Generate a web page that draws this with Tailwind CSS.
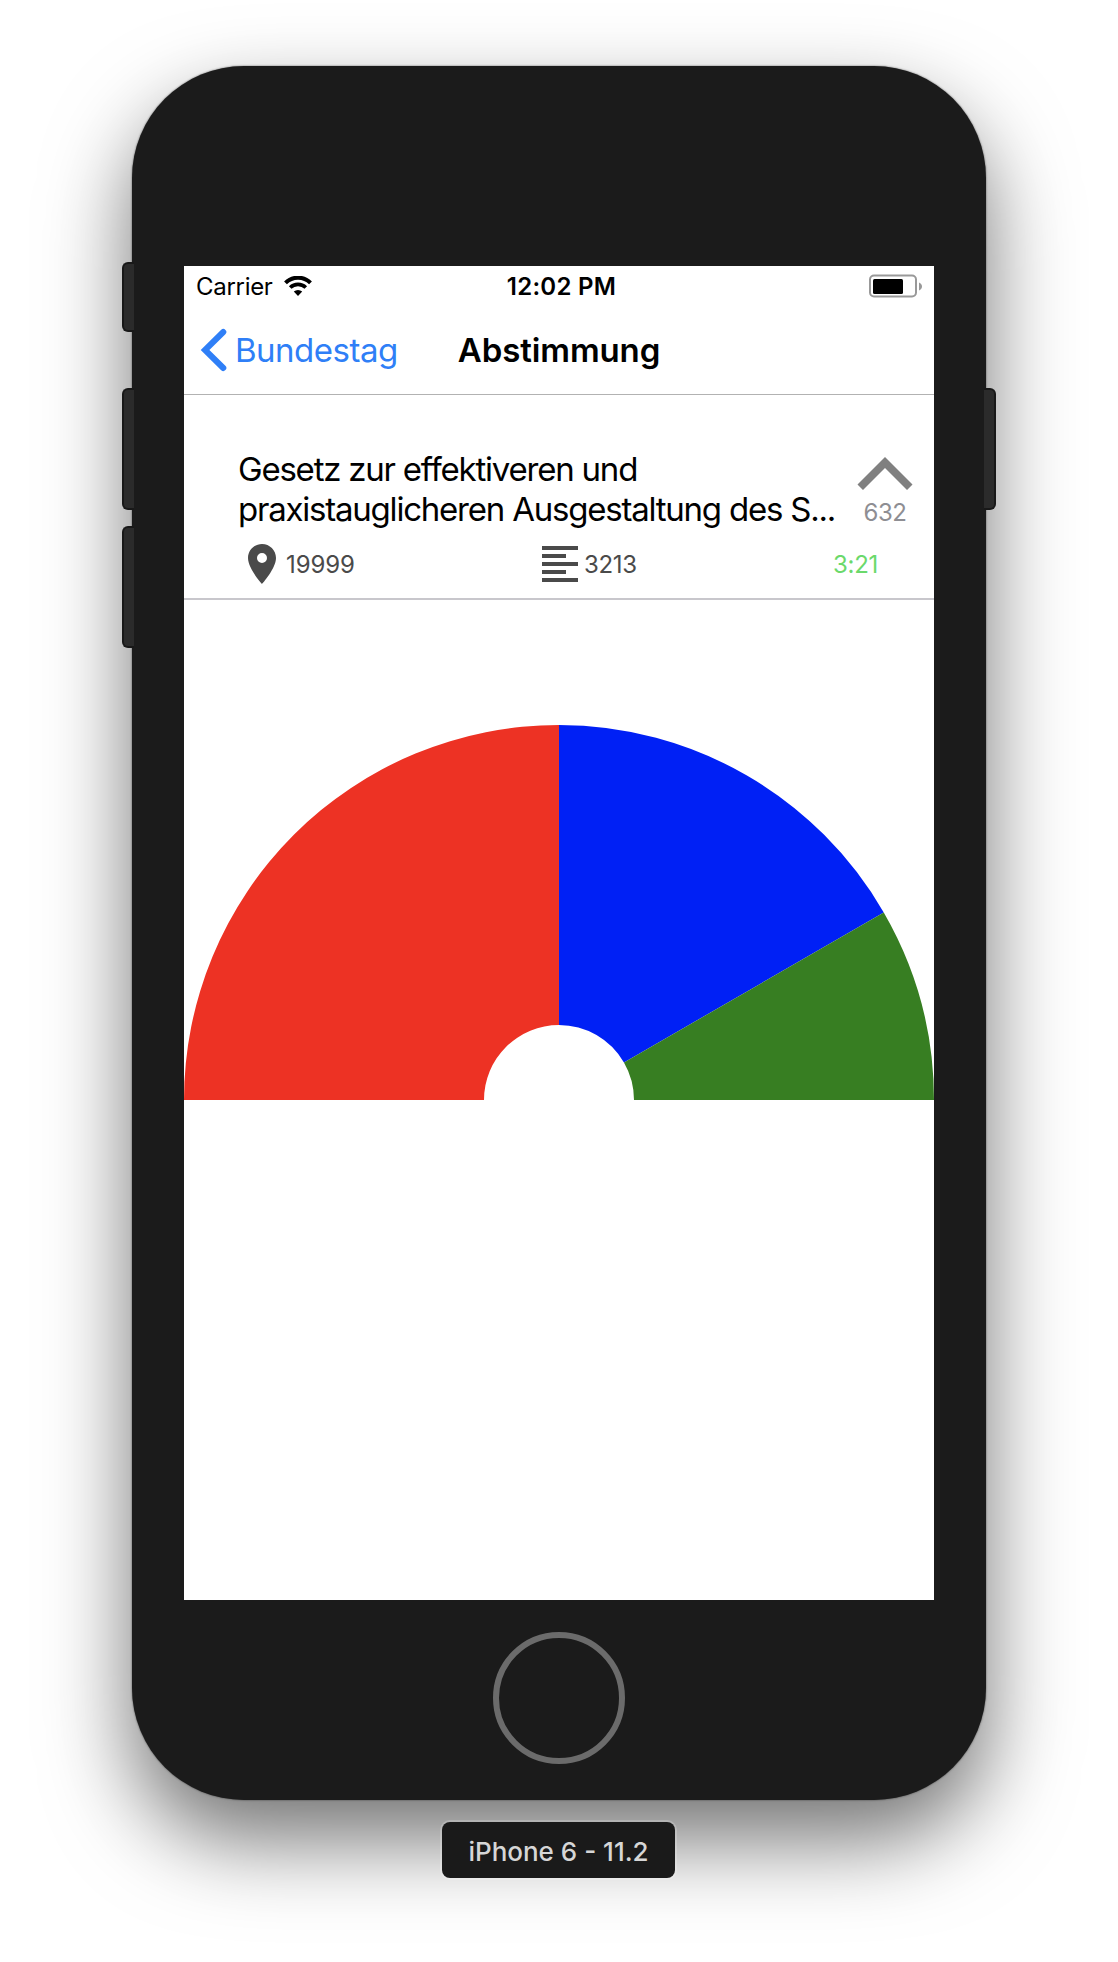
<!DOCTYPE html>
<html lang="de">
<head>
<meta charset="utf-8">
<title>Abstimmung</title>
<script src="https://cdn.jsdelivr.net/npm/@tailwindcss/browser@4"></script>
</head>
<body class="bg-white">
<div class="flex h-[1962px] w-[1118px] flex-col items-center overflow-hidden bg-white pt-[66px] font-[Inter,sans-serif] text-black">
  <div class="relative flex h-[1734px] w-[854px] shrink-0 flex-col items-center rounded-[112px] bg-[#1b1b1b] pt-[200px] shadow-[0_0_2px_rgba(0,0,0,0.6),0_40px_86px_rgba(0,0,0,0.55)]">
    <!-- hardware buttons -->
    <div class="absolute top-[196px] -left-[10px] h-[70px] w-3 rounded-l-[6px] border-2 border-r-0 border-[#181818] bg-[#2b2b2b]"></div>
    <div class="absolute top-[322px] -left-[10px] h-[122px] w-3 rounded-l-[6px] border-2 border-r-0 border-[#181818] bg-[#2b2b2b]"></div>
    <div class="absolute top-[460px] -left-[10px] h-[122px] w-3 rounded-l-[6px] border-2 border-r-0 border-[#181818] bg-[#2b2b2b]"></div>
    <div class="absolute top-[322px] -right-[10px] h-[122px] w-3 rounded-r-[6px] border-2 border-l-0 border-[#181818] bg-[#2b2b2b]"></div>

    <main class="flex h-[1334px] w-[750px] shrink-0 flex-col bg-white">
      <header class="h-[129px] shrink-0 border-b border-[#b2b2b2]">
        <div class="grid h-10 grid-cols-[1fr_auto_1fr] items-center pr-[11px] pl-3 text-2xl/[38px]">
          <div class="flex items-center gap-[10px]">
            <span class="w-[78px] pt-0.5 whitespace-nowrap tracking-[-0.3px]">Carrier</span>
            <svg class="h-5 w-7" viewBox="0 0 28 20">
              <path d="M1.500 6.800A17.700 17.700 0 0 1 26.500 6.800" fill="none" stroke="#000" stroke-width="4"/>
              <path d="M6.200 11.600A11 11 0 0 1 21.800 11.600" fill="none" stroke="#000" stroke-width="3.600"/>
              <path d="M9.800 15.600A6 6 0 0 1 18.200 15.600L14 20Z"/>
            </svg>
          </div>
          <span class="pt-0.5 pl-1 text-center font-semibold tracking-[0.3px] whitespace-nowrap">12:02 PM</span>
          <svg class="h-6 w-[54px] justify-self-end" viewBox="0 0 54 24">
            <rect x="1" y="1.500" width="46" height="21" rx="4" fill="none" stroke="#999" stroke-width="2"/>
            <rect x="4" y="5" width="30" height="15" rx="1.500"/>
            <path d="M50 8.500C54 10 54 15 50 16.500Z" fill="#999"/>
          </svg>
        </div>
        <div class="grid h-[88px] grid-cols-[1fr_auto_1fr] items-center px-4">
          <a class="flex items-center gap-[7px] text-[33px]/[44px] text-[#2f7ff7]">
            <svg class="h-[44px] w-[28px]" viewBox="0 0 28 44"><path d="M23.300 4L5 22L23.300 40" fill="none" stroke="currentColor" stroke-width="6" stroke-linecap="round"/></svg>
            <span class="whitespace-nowrap tracking-[-0.5px]">Bundestag</span>
          </a>
          <h1 class="text-[33px]/[44px] font-semibold tracking-[-0.1px] whitespace-nowrap">Abstimmung</h1>
          <span></span>
        </div>
      </header>

      <section class="flex h-[205px] shrink-0 flex-col border-b-2 border-[#c8c7cc] pt-[54px] pl-[54px]">
        <div class="flex h-20">
          <h2 class="w-[619px] text-[33px]/10 tracking-[-1.22px] whitespace-nowrap">Gesetz zur effektiveren und<br>praxistauglicheren Ausgestaltung des S...</h2>
          <div class="flex w-[56px] flex-col items-center pt-2">
            <svg class="h-[34px] w-14 shrink-0" viewBox="0 0 56 34"><path d="M0.500 27.500L28 0L55.500 27.500L50 33L28 11L6 33Z" fill="#808080"/></svg>
            <span class="mt-0.5 text-2xl/10 tracking-[-0.4px] text-[#8e8e93]">632</span>
          </div>
        </div>
        <div class="mt-[11px] flex h-12 items-center text-2xl/10 text-[#4a4a4a]">
          <svg class="size-12" viewBox="0 0 24 24"><path fill="currentColor" d="M12 2C8.130 2 5 5.130 5 9c0 5.250 7 13 7 13s7-7.750 7-13c0-3.870-3.130-7-7-7zm0 9.500a2.500 2.500 0 1 1 0-5 2.500 2.500 0 0 1 0 5z"/></svg>
          <span class="w-[256px] pt-0.5 tracking-[-0.1px]">19999</span>
          <svg class="h-9 w-9" viewBox="0 0 36 36"><path fill="currentColor" d="M0 0h36v4H0zM0 8h24v4H0zM0 16h36v4H0zM0 24h24v4H0zM0 32h36v4H0z"/></svg>
          <span class="ml-1.5 w-[249px] pt-0.5 tracking-[-0.3px]">3213</span>
          <span class="pt-0.5 tracking-[-0.3px] text-[#6bd96b]">3:21</span>
        </div>
      </section>

      <!-- vote distribution -->
      <svg class="mt-[125px] h-[375px] w-[750px] shrink-0" viewBox="0 0 750 375">
        <path d="M0 375A375 375 0 0 1 375 0V300A75 75 0 0 0 300 375Z" fill="#ed3224"/>
        <path d="M375 0A375 375 0 0 1 699.760 187.500L439.950 337.500A75 75 0 0 0 375 300Z" fill="#0020f5"/>
        <path d="M699.760 187.500A375 375 0 0 1 750 375H450A75 75 0 0 0 439.950 337.500Z" fill="#377e22"/>
      </svg>
    </main>

    <div class="mt-8 size-[132px] shrink-0 rounded-full border-[6px] border-[#6b6b6b]"></div>
  </div>
  <div class="relative mt-[22px] mr-px flex h-14 w-[233px] shrink-0 items-center justify-center rounded-lg bg-[#1a1a1a] pt-[3px] text-[26px]/[53px] font-medium whitespace-nowrap text-[#d6d6d6] shadow-[0_0_0_2px_rgba(255,255,255,0.2)]"><span>iPhone 6 - 11.2</span></div>
</div>
</body>
</html>
